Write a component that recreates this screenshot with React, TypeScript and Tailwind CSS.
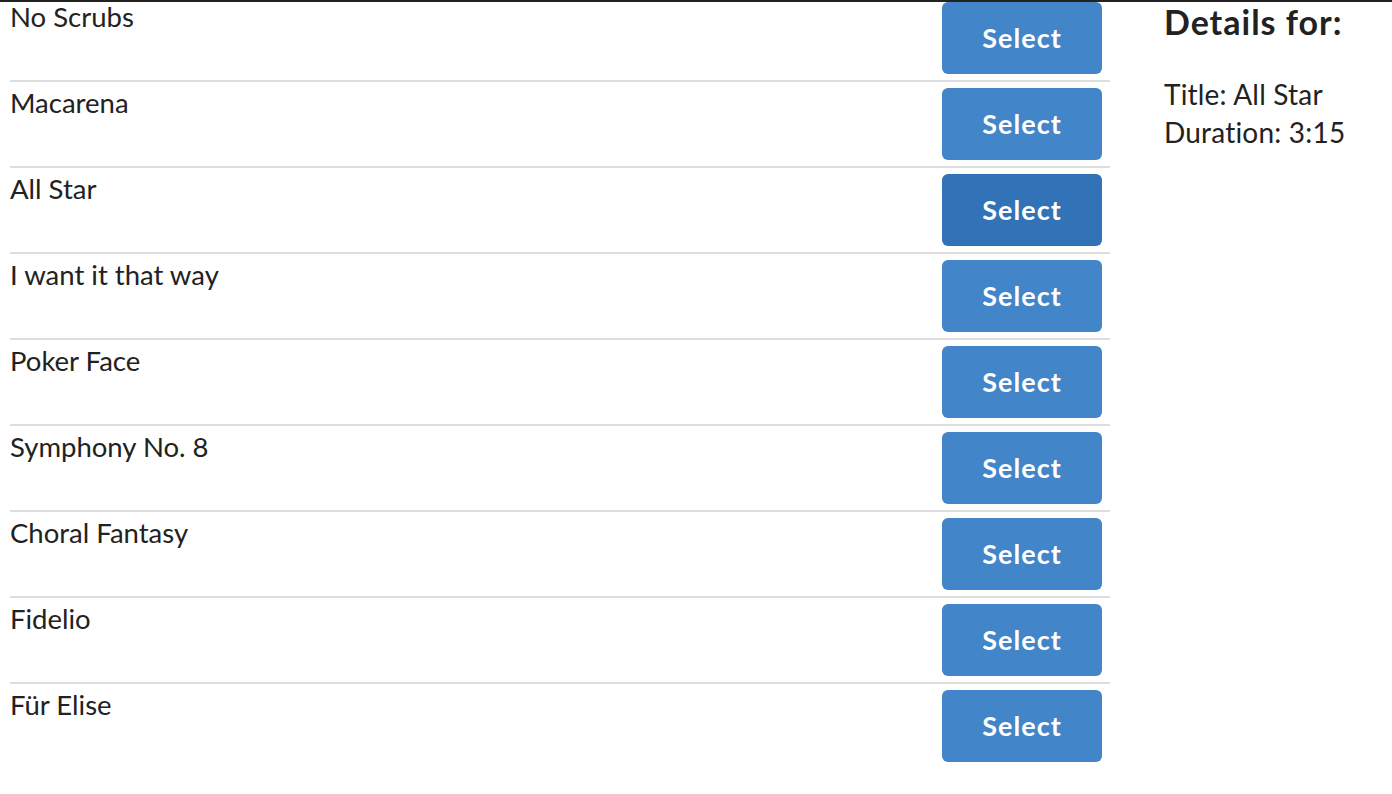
import { useState } from 'react';

const songs = [
  { title: 'No Scrubs', duration: '3:34' },
  { title: 'Macarena', duration: '3:52' },
  { title: 'All Star', duration: '3:15' },
  { title: 'I want it that way', duration: '3:33' },
  { title: 'Poker Face', duration: '3:57' },
  { title: 'Symphony No. 8', duration: '26:00' },
  { title: 'Choral Fantasy', duration: '19:00' },
  { title: 'Fidelio', duration: '2:10:00' },
  { title: 'Für Elise', duration: '2:55' },
];

export default function App() {
  const [selected, setSelected] = useState(2);
  const song = songs[selected];

  return (
    <div className="min-h-screen bg-white border-t-2 border-[#222] font-['Lato','Liberation_Sans',sans-serif] text-[#222] [font-variant-ligatures:none]">
      <div className="flex items-start">
        {/* Song list */}
        <ul className="ml-[10px] w-[1100px] divide-y-2 divide-[#ddd]">
          {songs.map((s, i) => (
            <li key={s.title} className="flex items-start justify-between py-[6px] first:pt-0 last:pb-0">
              <span className="text-[27.5px] leading-[1.1]">{s.title}</span>
              <button
                onClick={() => setSelected(i)}
                className={`mr-[8px] w-[160px] h-[72px] rounded-[6px] text-white font-bold text-[27px] tracking-[1px] ${
                  i === selected ? 'bg-[#3272b6]' : 'bg-[#4285c9]'
                }`}
              >
                Select
              </button>
            </li>
          ))}
        </ul>

        {/* Details */}
        <div className="ml-[54px]">
          <h2 className="text-[34px] leading-[1.2] font-bold tracking-[1px]">Details for:</h2>
          <div className="mt-[32px] text-[28px] leading-[38px] tracking-[0.2px]">
            <div>Title: {song.title}</div>
            <div>Duration: {song.duration}</div>
          </div>
        </div>
      </div>
    </div>
  );
}
